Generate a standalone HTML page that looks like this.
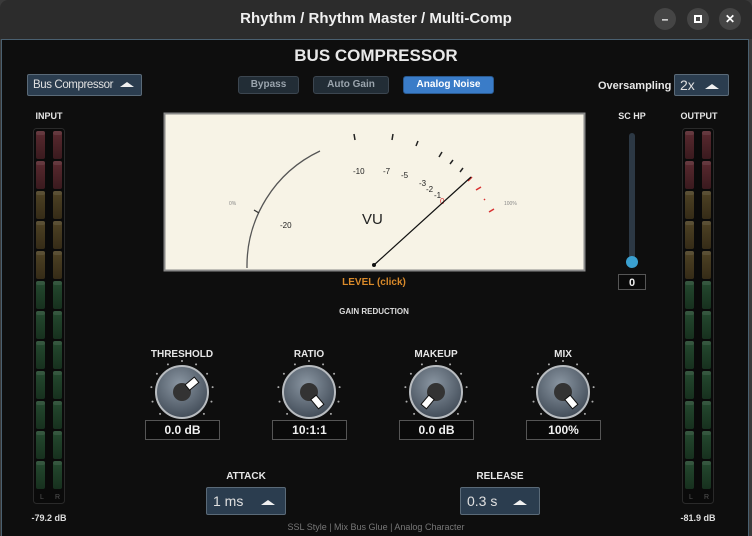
<!DOCTYPE html>
<html><head><style>
*{margin:0;padding:0;box-sizing:border-box}
body{width:752px;height:536px;background:#3a3a3a;font-family:"Liberation Sans",sans-serif;position:relative;overflow:hidden}
.abs{position:absolute}
.title{left:0;top:0;width:752px;height:39px;background:#2c2c2c;border-radius:8px 8px 0 0;color:#f0f0f0;font-weight:bold;font-size:15px;text-align:center;line-height:38px}
.wb{top:8px;width:22px;height:22px;border-radius:50%;background:#454545;color:#fff;font-size:12px;text-align:center;line-height:22px;font-weight:bold}
.main{left:1px;top:39px;width:748px;height:497px;background:#0e0e0e;border:1px solid #4a6070;border-bottom:none}
.lbl{color:#e6e6e6;font-weight:bold;font-size:9px;text-align:center}
.btn{top:76px;height:18px;border-radius:3px;font-size:10px;font-weight:bold;text-align:center;line-height:16px;background:#222d36;color:#9aa4ad;border:1px solid #3c4650}
.sel{background:#2b3d4f;border:1px solid #5a6a78;color:#eaeaea;border-radius:2px;white-space:nowrap;overflow:hidden}
.tri{display:inline-block;width:0;height:0;border-left:7px solid transparent;border-right:7px solid transparent;border-bottom:5px solid #f0f0f0;vertical-align:middle}
.val{top:420px;width:75px;height:20px;border:1px solid #555;background:#0a0a0a;color:#f0f0f0;font-size:12px;font-weight:bold;text-align:center;line-height:18px}
</style></head><body>
<div class="abs title">Rhythm / Rhythm Master / Multi-Comp</div>
<div class="abs wb" style="left:654px">–</div>
<div class="abs wb" style="left:687px"><div style="width:8px;height:8px;border:2px solid #fff;margin:7px auto"></div></div>
<div class="abs wb" style="left:719px">✕</div>
<div class="abs main"></div>
<div class="abs" style="left:0;top:46px;width:752px;text-align:center;color:#e8e8e8;font-weight:bold;font-size:17px">BUS COMPRESSOR</div>
<div class="abs sel" style="left:27px;top:74px;width:115px;height:22px;color:#e0e0e0;font-size:11.5px;letter-spacing:-0.4px;line-height:20px;padding-left:5px">Bus Compressor <span class="tri" style="margin-left:4px"></span></div>
<div class="abs btn" style="left:238px;width:61px">Bypass</div>
<div class="abs btn" style="left:313px;width:76px">Auto Gain</div>
<div class="abs btn" style="left:403px;width:91px;background:#3a7cc8;color:#fff;border-color:#2a5a90">Analog Noise</div>
<div class="abs" style="left:598px;top:80px;color:#e6e6e6;font-weight:bold;font-size:11px">Oversampling</div>
<div class="abs sel" style="left:674px;top:74px;width:55px;height:22px;color:#e0e0e0;font-size:14px;line-height:20px;padding-left:5px">2x <span class="tri" style="margin-left:6px"></span></div>
<div class="abs lbl" style="left:20px;top:111px;width:58px">INPUT</div>
<div class="abs lbl" style="left:670px;top:111px;width:58px">OUTPUT</div>
<div class="abs lbl" style="left:602px;top:111px;width:60px">SC HP</div>
<svg class="abs" style="left:0;top:0" width="752" height="536">
<defs>
<linearGradient id="r" x1="0" y1="0" x2="0" y2="1"><stop offset="0" stop-color="#5a2a30"/><stop offset="1" stop-color="#3a1a1e"/></linearGradient>
<linearGradient id="y" x1="0" y1="0" x2="0" y2="1"><stop offset="0" stop-color="#4f4325"/><stop offset="1" stop-color="#352b17"/></linearGradient>
<linearGradient id="g" x1="0" y1="0" x2="0" y2="1"><stop offset="0" stop-color="#254a30"/><stop offset="1" stop-color="#17301e"/></linearGradient>
<radialGradient id="k" cx="0.45" cy="0.35" r="0.7"><stop offset="0" stop-color="#8a96a2"/><stop offset="1" stop-color="#3e4854"/></radialGradient>
</defs>
<rect x="33.5" y="128.5" width="31" height="375" rx="3" fill="#0a0a0a" stroke="#2a2a2a"/>
<rect x="682.5" y="128.5" width="31" height="375" rx="3" fill="#0a0a0a" stroke="#2a2a2a"/>
<g id="segs"></g>
<text x="40" y="499" fill="#555" font-size="7">L</text><text x="55" y="499" fill="#555" font-size="7">R</text>
<text x="689" y="499" fill="#555" font-size="7">L</text><text x="704" y="499" fill="#555" font-size="7">R</text>
<rect x="164.5" y="113.5" width="420" height="157" fill="#f7f3e6" stroke="#888" stroke-width="2"/>
<path d="M247 268 A127 127 0 0 1 320 151" fill="none" stroke="#555" stroke-width="1.3"/>
<line x1="254" y1="210" x2="259" y2="213" stroke="#333" stroke-width="1.3"/>
<g stroke="#222" stroke-width="1.5">
<line x1="354" y1="134" x2="355" y2="140"/><line x1="393" y1="134" x2="392" y2="140"/>
<line x1="418" y1="141" x2="416" y2="146"/><line x1="442" y1="152" x2="439" y2="157"/>
<line x1="453" y1="160" x2="450" y2="164"/><line x1="463" y1="168" x2="460" y2="172"/>
</g>
<g stroke="#d83030" stroke-width="1.5">
<line x1="472" y1="177" x2="468" y2="181"/><line x1="481" y1="187" x2="476" y2="190"/>
<line x1="484" y1="199" x2="485" y2="200"/><line x1="494" y1="209" x2="489" y2="212"/>
</g>
<g font-size="8" fill="#222">
<text x="353" y="174">-10</text><text x="383" y="174">-7</text><text x="401" y="178">-5</text>
<text x="419" y="186">-3</text><text x="426" y="192">-2</text><text x="434" y="198">-1</text>
<text x="440" y="204" fill="#d83030">0</text><text x="280" y="228">-20</text>
</g>
<text x="229" y="205" font-size="5" fill="#888">0%</text><text x="504" y="205" font-size="5" fill="#888">100%</text>
<text x="362" y="224" font-size="15" fill="#222">VU</text>
<line x1="374" y1="265" x2="471" y2="177" stroke="#111" stroke-width="1.2"/>
<circle cx="374" cy="265" r="2" fill="#111"/>
<text x="374" y="285" font-size="10" font-weight="bold" fill="#d98a2a" text-anchor="middle">LEVEL (click)</text>
<text x="374" y="314" font-size="8" font-weight="bold" fill="#ddd" text-anchor="middle">GAIN REDUCTION</text>
<rect x="629" y="133" width="6" height="130" rx="3" fill="#2c3844"/>
<circle cx="632" cy="262" r="6" fill="#3aa0d0"/>
<rect x="618.5" y="274.5" width="27" height="15" fill="#0a0a0a" stroke="#555"/>
<text x="632" y="286" font-size="11" font-weight="bold" fill="#eee" text-anchor="middle">0</text>
<g id="knobs"></g>
<text x="376" y="530" font-size="9" fill="#777" text-anchor="middle">SSL Style | Mix Bus Glue | Analog Character</text>
<text x="49" y="521" font-size="9" font-weight="bold" fill="#ddd" text-anchor="middle">-79.2 dB</text>
<text x="698" y="521" font-size="9" font-weight="bold" fill="#ddd" text-anchor="middle">-81.9 dB</text>
</svg>
<script>
var s='',cols=['r','r','y','y','y','g','g','g','g','g','g','g'];
[36,53,685,702].forEach(function(x){for(var i=0;i<12;i++){s+='<rect x="'+x+'" y="'+(131+i*30)+'" width="9" height="28" rx="2" fill="url(#'+cols[i]+')"/><rect x="'+x+'" y="'+(131+i*30)+'" width="9" height="4" rx="2" fill="#fff" opacity="0.08"/>';}});
document.getElementById('segs').innerHTML=s;
var k='',ks=[[182,50],[309,140],[436,220],[563,140]];
ks.forEach(function(a){var cx=a[0],cy=392;
for(var j=0;j<11;j++){var an=(135+j*27)*Math.PI/180;k+='<circle cx="'+(cx+31*Math.cos(an))+'" cy="'+(cy+31*Math.sin(an))+'" r="1" fill="#aaa"/>';}
k+='<circle cx="'+cx+'" cy="'+cy+'" r="26" fill="url(#k)" stroke="#b8bcc0" stroke-width="2"/><circle cx="'+cx+'" cy="'+cy+'" r="9" fill="#333"/>';
k+='<rect x="'+(cx-3.5)+'" y="'+(cy-19)+'" width="7" height="12" fill="#fff" stroke="#111" transform="rotate('+a[1]+' '+cx+' '+cy+')"/>';});
document.getElementById('knobs').innerHTML=k;
</script>
<div class="abs lbl" style="left:132px;top:349px;width:100px;font-size:10px">THRESHOLD</div>
<div class="abs lbl" style="left:259px;top:349px;width:100px;font-size:10px">RATIO</div>
<div class="abs lbl" style="left:386px;top:349px;width:100px;font-size:10px">MAKEUP</div>
<div class="abs lbl" style="left:513px;top:349px;width:100px;font-size:10px">MIX</div>
<div class="abs val" style="left:145px">0.0 dB</div>
<div class="abs val" style="left:272px">10:1:1</div>
<div class="abs val" style="left:399px">0.0 dB</div>
<div class="abs val" style="left:526px">100%</div>
<div class="abs lbl" style="left:206px;top:471px;width:80px;font-size:10px">ATTACK</div>
<div class="abs lbl" style="left:460px;top:471px;width:80px;font-size:10px">RELEASE</div>
<div class="abs sel" style="left:206px;top:487px;width:80px;height:28px;color:#e0e0e0;font-size:14px;line-height:26px;padding-left:6px">1 ms <span class="tri" style="margin-left:14px"></span></div>
<div class="abs sel" style="left:460px;top:487px;width:80px;height:28px;color:#e0e0e0;font-size:14px;line-height:26px;padding-left:6px">0.3 s <span class="tri" style="margin-left:12px"></span></div>
</body></html>
